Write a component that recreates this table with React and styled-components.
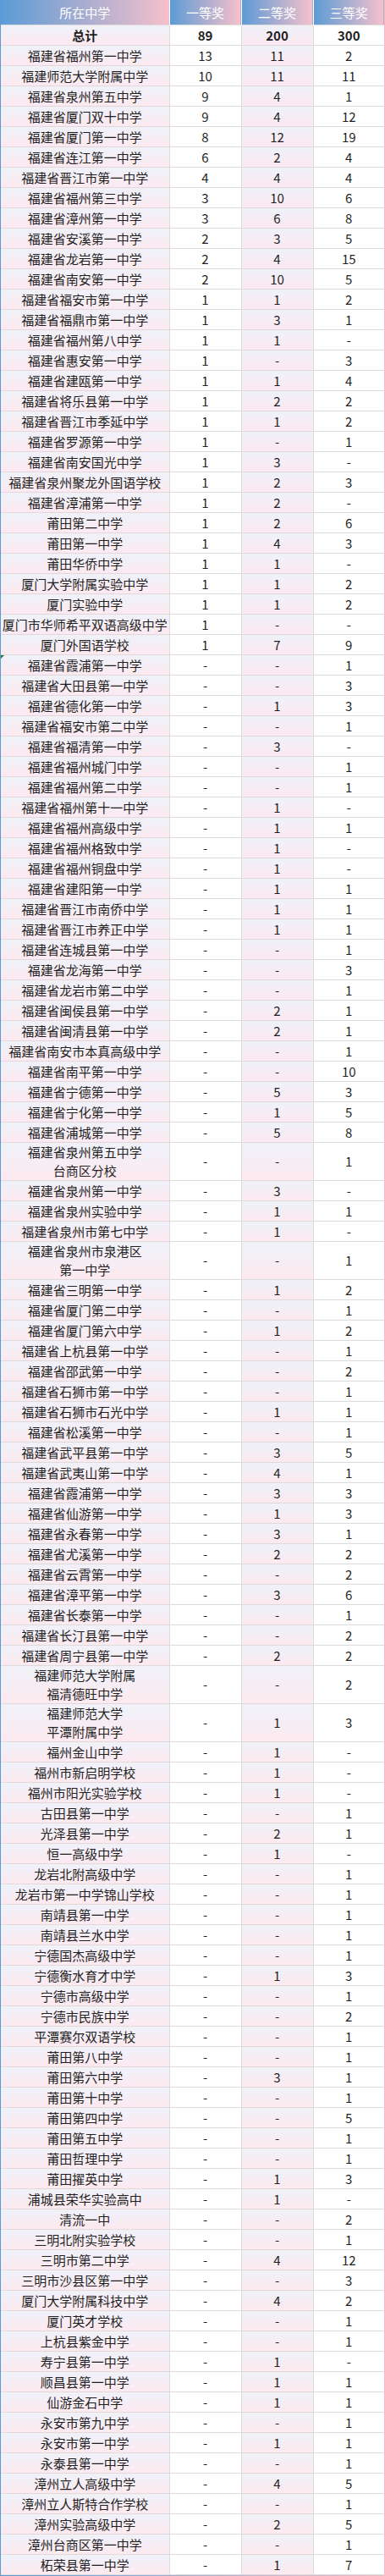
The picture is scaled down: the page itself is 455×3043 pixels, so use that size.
import React from "react";
import styled, { createGlobalStyle, css } from "styled-components";

const GlobalStyle = createGlobalStyle`
  html, body { margin: 0; padding: 0; background: #ffffff; }
  body { font-family: "Noto Sans CJK SC", "Microsoft YaHei", "Noto Sans", sans-serif; }
`;

const Frame = styled.div`
  width: 455px;
  box-sizing: border-box;
  padding: 0 1px 1px 1px;
  background: linear-gradient(to right, #5b9bd5, #f6bcc8);
`;

const Table = styled.table`
  width: 453px;
  border-collapse: collapse;
  table-layout: fixed;
  background: #ffffff;
`;

const HeadCell = styled.th`
  height: 29px;
  padding: 0;
  font-size: 15px;
  font-weight: normal;
  line-height: 22px;
  color: #ffffff;
  text-align: center;
  background: linear-gradient(to right, #5b9bd5, #f7c0cb);
  border-left: 1px solid #ffffff;
  &:first-child { border-left: none; }
`;

const shaded = css`
  background: linear-gradient(to bottom, #eff1f9, #fde9ef);
`;

const Cell = styled.td`
  position: relative;
  height: 23px;
  padding: 0;
  font-size: 15px;
  line-height: 22px;
  color: #1f1f1f;
  text-align: center;
  vertical-align: middle;
  font-weight: ${(p) => (p.$bold ? 700 : 400)};
  border: 1px solid #dcdcdc;
  &:first-child { border-left: none; }
  &:last-child { border-right: none; }
  ${(p) => (p.$shaded ? shaded : "background: #ffffff;")}
  ${(p) =>
    p.$flag &&
    css`
      &::before {
        content: "";
        position: absolute;
        left: 0;
        top: 0;
        border-top: 4px solid #1f7a35;
        border-right: 4px solid transparent;
      }
    `}
`;

const rows = [
  ["福建省福州第一中学", "13", "11", "2"],
  ["福建师范大学附属中学", "10", "11", "11"],
  ["福建省泉州第五中学", "9", "4", "1"],
  ["福建省厦门双十中学", "9", "4", "12"],
  ["福建省厦门第一中学", "8", "12", "19"],
  ["福建省连江第一中学", "6", "2", "4"],
  ["福建省晋江市第一中学", "4", "4", "4"],
  ["福建省福州第三中学", "3", "10", "6"],
  ["福建省漳州第一中学", "3", "6", "8"],
  ["福建省安溪第一中学", "2", "3", "5"],
  ["福建省龙岩第一中学", "2", "4", "15"],
  ["福建省南安第一中学", "2", "10", "5"],
  ["福建省福安市第一中学", "1", "1", "2"],
  ["福建省福鼎市第一中学", "1", "3", "1"],
  ["福建省福州第八中学", "1", "1", "-"],
  ["福建省惠安第一中学", "1", "-", "3"],
  ["福建省建瓯第一中学", "1", "1", "4"],
  ["福建省将乐县第一中学", "1", "2", "2"],
  ["福建省晋江市季延中学", "1", "1", "2"],
  ["福建省罗源第一中学", "1", "-", "1"],
  ["福建省南安国光中学", "1", "3", "-"],
  ["福建省泉州聚龙外国语学校", "1", "2", "3"],
  ["福建省漳浦第一中学", "1", "2", "-"],
  ["莆田第二中学", "1", "2", "6"],
  ["莆田第一中学", "1", "4", "3"],
  ["莆田华侨中学", "1", "1", "-"],
  ["厦门大学附属实验中学", "1", "1", "2"],
  ["厦门实验中学", "1", "1", "2"],
  ["厦门市华师希平双语高级中学", "1", "-", "-"],
  ["厦门外国语学校", "1", "7", "9"],
  ["福建省霞浦第一中学", "-", "-", "1", true],
  ["福建省大田县第一中学", "-", "-", "3"],
  ["福建省德化第一中学", "-", "1", "3"],
  ["福建省福安市第二中学", "-", "-", "1"],
  ["福建省福清第一中学", "-", "3", "-"],
  ["福建省福州城门中学", "-", "-", "1"],
  ["福建省福州第二中学", "-", "-", "1"],
  ["福建省福州第十一中学", "-", "1", "-"],
  ["福建省福州高级中学", "-", "1", "1"],
  ["福建省福州格致中学", "-", "1", "-"],
  ["福建省福州铜盘中学", "-", "1", "-"],
  ["福建省建阳第一中学", "-", "1", "1"],
  ["福建省晋江市南侨中学", "-", "1", "1"],
  ["福建省晋江市养正中学", "-", "1", "1"],
  ["福建省连城县第一中学", "-", "-", "1"],
  ["福建省龙海第一中学", "-", "-", "3"],
  ["福建省龙岩市第二中学", "-", "-", "1"],
  ["福建省闽侯县第一中学", "-", "2", "1"],
  ["福建省闽清县第一中学", "-", "2", "1"],
  ["福建省南安市本真高级中学", "-", "-", "1"],
  ["福建省南平第一中学", "-", "-", "10"],
  ["福建省宁德第一中学", "-", "5", "3"],
  ["福建省宁化第一中学", "-", "1", "5"],
  ["福建省浦城第一中学", "-", "5", "8"],
  [["福建省泉州第五中学", "台商区分校"], "-", "-", "1"],
  ["福建省泉州第一中学", "-", "3", "-"],
  ["福建省泉州实验中学", "-", "1", "1"],
  ["福建省泉州市第七中学", "-", "1", "-"],
  [["福建省泉州市泉港区", "第一中学"], "-", "-", "1"],
  ["福建省三明第一中学", "-", "1", "2"],
  ["福建省厦门第二中学", "-", "-", "1"],
  ["福建省厦门第六中学", "-", "1", "2"],
  ["福建省上杭县第一中学", "-", "-", "1"],
  ["福建省邵武第一中学", "-", "-", "2"],
  ["福建省石狮市第一中学", "-", "-", "1"],
  ["福建省石狮市石光中学", "-", "1", "1"],
  ["福建省松溪第一中学", "-", "-", "1"],
  ["福建省武平县第一中学", "-", "3", "5"],
  ["福建省武夷山第一中学", "-", "4", "1"],
  ["福建省霞浦第一中学", "-", "3", "3"],
  ["福建省仙游第一中学", "-", "1", "3"],
  ["福建省永春第一中学", "-", "3", "1"],
  ["福建省尤溪第一中学", "-", "2", "2"],
  ["福建省云霄第一中学", "-", "-", "2"],
  ["福建省漳平第一中学", "-", "3", "6"],
  ["福建省长泰第一中学", "-", "-", "1"],
  ["福建省长汀县第一中学", "-", "-", "2"],
  ["福建省周宁县第一中学", "-", "2", "2"],
  [["福建师范大学附属", "福清德旺中学"], "-", "-", "2"],
  [["福建师范大学", "平潭附属中学"], "-", "1", "3"],
  ["福州金山中学", "-", "1", "-"],
  ["福州市新启明学校", "-", "1", "-"],
  ["福州市阳光实验学校", "-", "1", "-"],
  ["古田县第一中学", "-", "-", "1"],
  ["光泽县第一中学", "-", "2", "1"],
  ["恒一高级中学", "-", "1", "-"],
  ["龙岩北附高级中学", "-", "-", "1"],
  ["龙岩市第一中学锦山学校", "-", "-", "1"],
  ["南靖县第一中学", "-", "-", "1"],
  ["南靖县兰水中学", "-", "-", "1"],
  ["宁德国杰高级中学", "-", "-", "1"],
  ["宁德衡水育才中学", "-", "1", "3"],
  ["宁德市高级中学", "-", "-", "1"],
  ["宁德市民族中学", "-", "-", "2"],
  ["平潭赛尔双语学校", "-", "-", "1"],
  ["莆田第八中学", "-", "-", "1"],
  ["莆田第六中学", "-", "3", "1"],
  ["莆田第十中学", "-", "-", "1"],
  ["莆田第四中学", "-", "-", "5"],
  ["莆田第五中学", "-", "-", "1"],
  ["莆田哲理中学", "-", "-", "1"],
  ["莆田擢英中学", "-", "1", "3"],
  ["浦城县荣华实验高中", "-", "1", "-"],
  ["清流一中", "-", "-", "2"],
  ["三明北附实验学校", "-", "-", "1"],
  ["三明市第二中学", "-", "4", "12"],
  ["三明市沙县区第一中学", "-", "-", "3"],
  ["厦门大学附属科技中学", "-", "4", "2"],
  ["厦门英才学校", "-", "-", "1"],
  ["上杭县紫金中学", "-", "-", "1"],
  ["寿宁县第一中学", "-", "1", "-"],
  ["顺昌县第一中学", "-", "1", "1"],
  ["仙游金石中学", "-", "1", "1"],
  ["永安市第九中学", "-", "-", "1"],
  ["永安市第一中学", "-", "1", "1"],
  ["永泰县第一中学", "-", "-", "1"],
  ["漳州立人高级中学", "-", "4", "5"],
  ["漳州立人斯特合作学校", "-", "-", "1"],
  ["漳州实验高级中学", "-", "2", "5"],
  ["漳州台商区第一中学", "-", "-", "1"],
  ["柘荣县第一中学", "-", "1", "7"],
];

function SchoolName({ name }) {
  if (Array.isArray(name)) {
    return (
      <>
        {name[0]}
        <br />
        {name[1]}
      </>
    );
  }
  return name;
}

export default function App() {
  return (
    <>
      <GlobalStyle />
      <Frame>
        <Table>
          <colgroup>
            <col style={{ width: "199px" }} />
            <col style={{ width: "85px" }} />
            <col style={{ width: "85px" }} />
            <col style={{ width: "84px" }} />
          </colgroup>
          <thead>
            <tr>
              <HeadCell>所在中学</HeadCell>
              <HeadCell>一等奖</HeadCell>
              <HeadCell>二等奖</HeadCell>
              <HeadCell>三等奖</HeadCell>
            </tr>
          </thead>
          <tbody>
            <tr>
              <Cell $shaded $bold>总计</Cell>
              <Cell $bold>89</Cell>
              <Cell $shaded $bold>200</Cell>
              <Cell $bold>300</Cell>
            </tr>
            {rows.map(([name, a, b, c, flag], i) => (
              <tr key={i}>
                <Cell $shaded $flag={flag}>
                  <SchoolName name={name} />
                </Cell>
                <Cell>{a}</Cell>
                <Cell $shaded>{b}</Cell>
                <Cell>{c}</Cell>
              </tr>
            ))}
          </tbody>
        </Table>
      </Frame>
    </>
  );
}
